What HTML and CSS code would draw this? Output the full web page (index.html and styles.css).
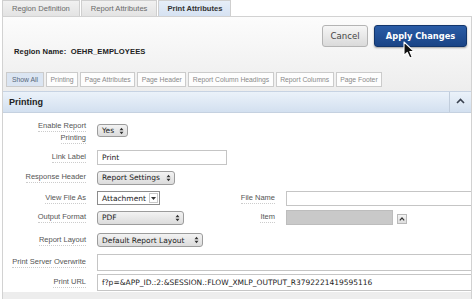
FILE: index.html
```html
<!DOCTYPE html>
<html>
<head>
<meta charset="utf-8">
<link rel="stylesheet" href="styles.css">
</head>
<body>
<div class="tabs">
  <div class="tab">Region Definition</div>
  <div class="tab">Report Attributes</div>
  <div class="tab active">Print Attributes</div>
</div>
<div class="panel">
  <div class="head">
    <div class="rname">Region Name:&nbsp; OEHR_EMPLOYEES</div>
    <div class="buttons">
      <div class="btn cancel">Cancel</div>
      <div class="btn apply">Apply Changes</div>
    </div>
  </div>
  <div class="subtabs">
    <div class="st active">Show All</div>
    <div class="st">Printing</div>
    <div class="st">Page Attributes</div>
    <div class="st">Page Header</div>
    <div class="st">Report Column Headings</div>
    <div class="st">Report Columns</div>
    <div class="st">Page Footer</div>
  </div>
  <div class="region">
    <div class="rhead">
      <div class="rtitle">Printing</div>
      <div class="rtoggle"><svg width="9" height="6" viewBox="0 0 9 6"><path d="M1 5 L4.5 1.5 L8 5" fill="none" stroke="#3a4250" stroke-width="1.6"/></svg></div>
    </div>
    <div class="form">
      <div class="lbl top"><div class="two"><span>Enable Report</span><span>Printing</span></div></div>
      <div class="ctl top"><div class="sel gtk w-yes"><span>Yes</span><svg class="ud" width="5" height="8" viewBox="0 0 5 8"><path d="M0.5 3.2 L2.5 0.8 L4.5 3.2Z M0.5 4.8 L2.5 7.2 L4.5 4.8Z" fill="#333"/></svg></div></div>
      <div class="spacer"></div>

      <div class="lbl"><span>Link Label</span></div>
      <div class="ctl"><div class="inp w-link">Print</div></div>
      <div class="spacer"></div>

      <div class="lbl"><span>Response Header</span></div>
      <div class="ctl"><div class="sel gtk w-resp"><span>Report Settings</span><svg class="ud" width="5" height="8" viewBox="0 0 5 8"><path d="M0.5 3.2 L2.5 0.8 L4.5 3.2Z M0.5 4.8 L2.5 7.2 L4.5 4.8Z" fill="#333"/></svg></div></div>
      <div class="spacer"></div>

      <div class="lbl"><span>View File As</span></div>
      <div class="ctl"><div class="sel plain w-att"><span>Attachment</span><div class="dd"><svg width="5" height="3" viewBox="0 0 5 3"><path d="M0 0 L5 0 L2.5 3Z" fill="#333"/></svg></div></div></div>
      <div class="lbl2"><span>File Name</span></div>
      <div class="ctl"><div class="inp full"></div></div>

      <div class="lbl"><span>Output Format</span></div>
      <div class="ctl"><div class="sel gtk w-pdf"><span>PDF</span><svg class="ud" width="5" height="8" viewBox="0 0 5 8"><path d="M0.5 3.2 L2.5 0.8 L4.5 3.2Z M0.5 4.8 L2.5 7.2 L4.5 4.8Z" fill="#333"/></svg></div></div>
      <div class="lbl2"><span>Item</span></div>
      <div class="ctl item"><div class="inp gray"></div><div class="pick"><svg width="6" height="4" viewBox="0 0 6 4"><path d="M0.8 3.4 L3 1 L5.2 3.4" fill="none" stroke="#333" stroke-width="1.2"/></svg></div></div>

      <div class="lbl"><span>Report Layout</span></div>
      <div class="ctl"><div class="sel gtk w-lay"><span>Default Report Layout</span><svg class="ud" width="5" height="8" viewBox="0 0 5 8"><path d="M0.5 3.2 L2.5 0.8 L4.5 3.2Z M0.5 4.8 L2.5 7.2 L4.5 4.8Z" fill="#333"/></svg></div></div>
      <div class="spacer"></div>

      <div class="lbl"><span>Print Server Overwrite</span></div>
      <div class="ctl wide"><div class="inp full tall"></div></div>

      <div class="lbl"><span>Print URL</span></div>
      <div class="ctl wide"><div class="inp full tall">f?p=&amp;APP_ID.:2:&amp;SESSION.:FLOW_XMLP_OUTPUT_R3792221419595116</div></div>
    </div>
  </div>
</div>
<svg class="cursor" width="15" height="19" viewBox="0 0 15 19"><path d="M1 1 L1 14.5 L4.3 11.4 L6.8 17 L9.2 16 L6.8 10.6 L11.2 10.6 Z" fill="#111" stroke="#fff" stroke-width="1.1" stroke-linejoin="round"/></svg>
</body>
</html>
```

FILE: styles.css
```css
* { box-sizing: border-box; }
html, body { margin: 0; padding: 0; }
body {
  width: 474px;
  height: 299px;
  overflow: hidden;
  background: #ffffff;
  font-family: "Liberation Sans", Arial, sans-serif;
  position: relative;
}
.tabs {
  display: flex;
  height: 16px;
  padding-left: 2px;
  gap: 1px;
}
.tab {
  height: 16px;
  line-height: 15px;
  padding: 0 9px;
  font-size: 7.6px;
  color: #6a6a6a;
  background: linear-gradient(#f1f1f1, #e3e3e3);
  border: 1px solid #cfcfcf;
  border-bottom: none;
}
.tab.active {
  background: linear-gradient(#e6eef8, #d6e2f2);
  color: #333;
  font-weight: bold;
  padding: 0 8px;
}
.panel {
  margin-left: 2px;
  width: 470px;
  height: 283px;
  border: 1px solid #d2d2d2;
  border-bottom: none;
  background: linear-gradient(#fcfcfc, #ededed 75px);
  overflow: hidden;
}
.head {
  display: flex;
  justify-content: space-between;
  align-items: flex-start;
  height: 55px;
  padding: 8px 4px 0 11px;
}
.rname {
  margin-top: 22px;
  font-size: 7.6px;
  font-weight: bold;
  color: #222;
  letter-spacing: 0.1px;
}
.buttons { display: flex; gap: 6px; }
.btn {
  height: 22px;
  line-height: 20px;
  border-radius: 3px;
  font-family: "DejaVu Sans", sans-serif;
  text-align: center;
}
.cancel {
  width: 46px;
  font-size: 8.6px;
  color: #444;
  border: 1px solid #b4b4b4;
  background: linear-gradient(#f6f6f6, #dadada);
}
.apply {
  width: 93px;
  font-size: 8.3px;
  font-weight: bold;
  color: #fff;
  border: 1px solid #12356b;
  background: linear-gradient(#2a5ca6, #1a4486);
  box-shadow: 0 1px 2px rgba(0,0,0,0.35);
}
.subtabs {
  display: flex;
  gap: 2px;
  padding-left: 3px;
  height: 19px;
}
.st {
  height: 15px;
  line-height: 13px;
  padding: 0 3.5px;
  font-size: 6.8px;
  color: #8a8a8a;
  background: #fdfdfd;
  border: 1px solid #cbcbcb;
}
.st.active {
  background: #dbe5f2;
  color: #56657a;
  padding: 0 5px;
}
.region {
  background: #ffffff;
  border-top: 1px solid #c7d3e3;
}
.rhead {
  display: flex;
  height: 21px;
  background: linear-gradient(#ebf2fa, #d3e0f0);
  border-bottom: 1px solid #c5d1e0;
}
.rtitle {
  flex: 1;
  padding-left: 6px;
  line-height: 20px;
  font-size: 9px;
  font-weight: bold;
  color: #222;
}
.rtoggle {
  width: 22px;
  border-left: 1px solid #c1cddc;
  display: flex;
  align-items: center;
  justify-content: center;
  padding-bottom: 2px;
}
.form {
  display: grid;
  grid-template-columns: 83px 130px 37px 1fr;
  grid-template-rows: 34px 20px 21px 20px 19px 26px 19px 20px;
  column-gap: 11px;
  background: #fff;
}
.lbl, .lbl2 {
  display: flex;
  align-items: center;
  justify-content: flex-end;
  text-align: right;
  font-size: 7.5px;
  line-height: 10px;
  color: #555555;
}
.lbl span, .lbl2 span {
  display: inline-block;
  border-bottom: 1px dotted #cccccc;
}
.two {
  display: flex;
  flex-direction: column;
  align-items: flex-end;
  gap: 1px;
}
.lbl.top { align-items: flex-start; padding-top: 8px; }
.ctl { display: flex; align-items: center; }
.ctl.top { align-items: flex-start; padding-top: 11px; }
.ctl.wide { grid-column: 2 / 5; }
.spacer { grid-column: 3 / 5; }
.sel {
  display: flex;
  align-items: center;
  justify-content: space-between;
  height: 14px;
  font-family: "DejaVu Sans", sans-serif;
  font-size: 7.5px;
  color: #222;
  white-space: nowrap;
}
.gtk {
  padding: 0 3px 0 4px;
  border: 1px solid #9c9c9c;
  border-radius: 3px;
  background: linear-gradient(#f3f3f3, #dcdcdc);
}
.plain {
  padding: 0 0 0 4px;
  border: 1px solid #8c8c8c;
  background: #fff;
}
.dd {
  width: 9px;
  height: 10px;
  margin-right: 1px;
  border: 1px solid #c8c8c8;
  display: flex;
  align-items: center;
  justify-content: center;
}
.w-yes { width: 31px; height: 13px; }
.w-resp { width: 78px; }
.w-att { width: 63px; }
.w-pdf { width: 87px; }
.w-lay { width: 106px; }
.inp {
  height: 15px;
  border: 1px solid #c5c5c5;
  background: #fff;
  font-family: "DejaVu Sans", sans-serif;
  font-size: 7.5px;
  line-height: 13px;
  padding-left: 4px;
  color: #222;
  white-space: nowrap;
}
.w-link { width: 229px; }
.inp.full { width: 100%; min-width: 200px; }
.inp.tall { height: 17px; line-height: 15px; }
.item { gap: 4px; }
.inp.gray {
  width: 107px;
  background: #c9c9c9;
  border-color: #bdbdbd;
}
.pick {
  width: 10px;
  height: 10px;
  margin-top: 3px;
  border: 1px solid #b9b9b9;
  background: linear-gradient(#f4f4f4, #dedede);
  display: flex;
  align-items: center;
  justify-content: center;
}
.cursor {
  position: absolute;
  left: 403px;
  top: 41px;
}
```
